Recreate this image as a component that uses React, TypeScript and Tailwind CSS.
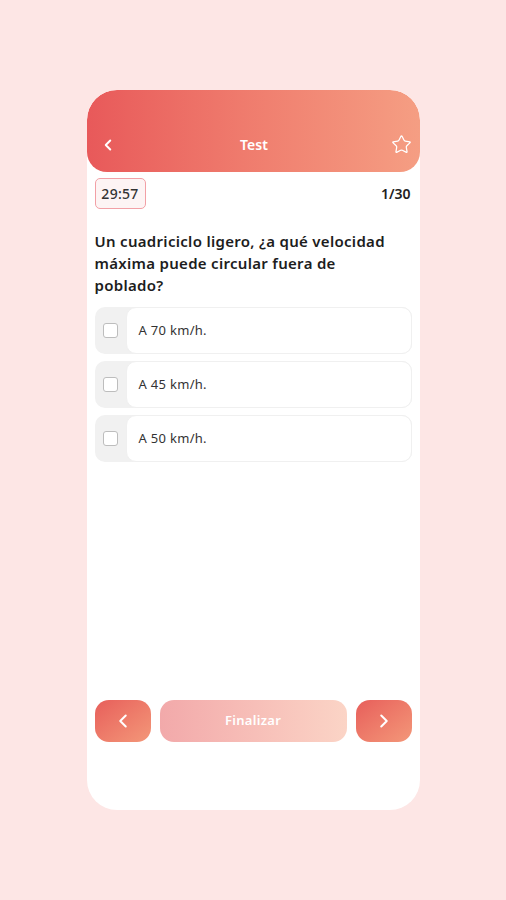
import { ChevronLeft, ChevronRight, Star } from "lucide-react";

const options = ["A 70 km/h.", "A 45 km/h.", "A 50 km/h."];

export default function App() {
  return (
    <div
      className="min-h-[900px] w-full bg-[#fde6e5] flex justify-center pt-[90px]"
      style={{ fontFamily: "'Noto Sans', 'Open Sans', sans-serif" }}
    >
      <div className="w-[333px] h-[720px] bg-white rounded-[30px] flex flex-col overflow-hidden">
        {/* header */}
        <div className="h-[82px] rounded-t-[30px] rounded-b-[20px] bg-gradient-to-r from-[#e8595a] to-[#f59e83] flex items-end pb-[17px] pl-[12px] pr-[7px]">
          <div className="w-full flex items-center justify-between">
            <ChevronLeft className="w-[18px] h-[18px] text-white" strokeWidth={2.6} />
            <span className="text-white text-[14px] font-semibold">Test</span>
            <Star className="w-[21px] h-[21px] text-white" strokeWidth={1.4} />
          </div>
        </div>

        <div className="px-[8px] flex flex-col flex-1">
          <div className="flex items-center justify-between mt-[6px]">
            <div className="h-[31px] w-[51px] border border-[#f2a0a6] rounded-[5px] bg-[#fdf4f4] flex items-center justify-center text-[14px] tracking-[0.3px] text-[#333] font-medium">
              29:57
            </div>
            <span className="text-[14px] font-semibold text-[#222] pr-[1px]">1/30</span>
          </div>

          <p className="mt-[21px] text-[15px] tracking-[0.3px] leading-[22px] font-semibold text-[#1d1d1d] pr-[12px]">
            Un cuadriciclo ligero, ¿a qué velocidad máxima puede circular fuera de poblado?
          </p>

          <div className="mt-[11px] flex flex-col gap-[7px]">
            {options.map((o) => (
              <div key={o} className="h-[47px] flex rounded-[10px] bg-[#f1f1f1]">
                <div className="w-[31px] flex items-center justify-center">
                  <div className="w-[15px] h-[15px] rounded-[3px] border-[1.5px] border-[#bdbdbd] bg-white" />
                </div>
                <div className="flex-1 bg-white rounded-[10px] border border-[#f0f0f0] flex items-center pl-[12px] text-[13px] tracking-[0.3px] text-[#333]">
                  {o}
                </div>
              </div>
            ))}
          </div>

          <div className="mt-auto mb-[68px] flex items-center gap-[9px]">
            <button className="w-[56px] h-[42px] rounded-[14px] bg-gradient-to-br from-[#e75e5b] to-[#f39779] flex items-center justify-center">
              <ChevronLeft className="w-[22px] h-[22px] text-white" strokeWidth={2.2} />
            </button>
            <button className="flex-1 h-[42px] rounded-[14px] bg-gradient-to-r from-[#f2a9aa] to-[#fbd4c6] text-white text-[13px] tracking-[0.3px] font-semibold">
              Finalizar
            </button>
            <button className="w-[56px] h-[42px] rounded-[14px] bg-gradient-to-br from-[#e75e5b] to-[#f39779] flex items-center justify-center">
              <ChevronRight className="w-[22px] h-[22px] text-white" strokeWidth={2.2} />
            </button>
          </div>
        </div>
      </div>
    </div>
  );
}
